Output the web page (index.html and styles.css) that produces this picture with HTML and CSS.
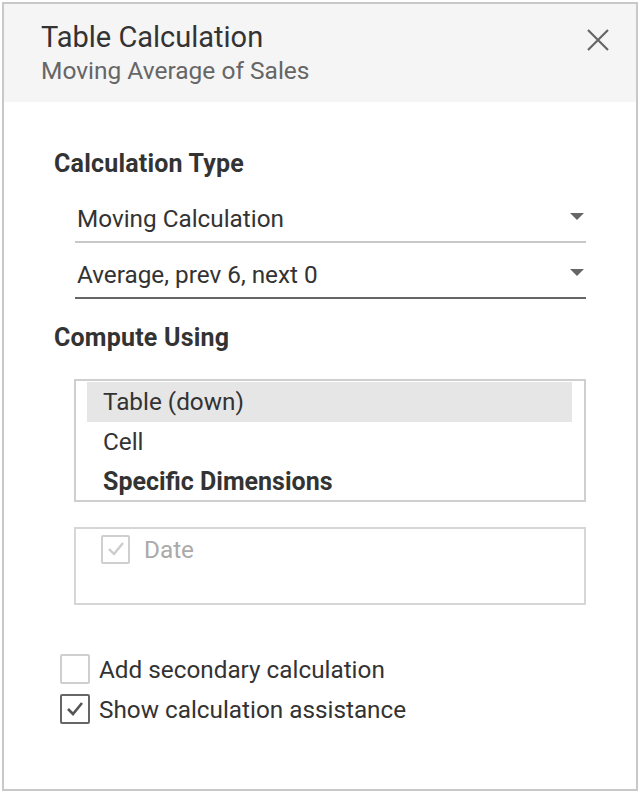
FILE: index.html
```html
<!DOCTYPE html>
<html>
<head>
<meta charset="utf-8">
<link rel="stylesheet" href="styles.css">
</head>
<body>
<div class="panel">
  <div class="header">
    <div class="titles">
      <div class="title">Table Calculation</div>
      <div class="subtitle">Moving Average of Sales</div>
    </div>
    <svg class="close" width="24" height="24" viewBox="0 0 24 24"><path d="M2 2 L22 22 M22 2 L2 22" stroke="#666" stroke-width="2.2" fill="none"/></svg>
  </div>
  <div class="content">
    <div class="section-title">Calculation Type</div>
    <div class="select light"><span>Moving Calculation</span><span class="arrow"></span></div>
    <div class="select dark"><span>Average, prev 6, next 0</span><span class="arrow"></span></div>
    <div class="section-title second">Compute Using</div>
    <div class="listbox">
      <div class="item selected">Table (down)</div>
      <div class="item">Cell</div>
      <div class="item bold">Specific Dimensions</div>
    </div>
    <div class="dimbox">
      <div class="check-row disabled">
        <span class="box"><svg width="18" height="14" viewBox="0 0 18 14"><path d="M2 7 L7 12 L16 1" stroke="#ccc" stroke-width="2.4" fill="none"/></svg></span>
        <span class="label">Date</span>
      </div>
    </div>
    <div class="options">
      <div class="check-row">
        <span class="box"></span>
        <span class="label">Add secondary calculation</span>
      </div>
      <div class="check-row">
        <span class="box checked"><svg width="18" height="14" viewBox="0 0 18 14"><path d="M2 7 L7 12 L16 1" stroke="#555" stroke-width="2.6" fill="none"/></svg></span>
        <span class="label">Show calculation assistance</span>
      </div>
    </div>
  </div>
</div>
</body>
</html>
```
FILE: styles.css
```css
* { box-sizing: border-box; }
html, body { margin: 0; padding: 0; background: #fff; }
body { font-family: Roboto, "Open Sans", sans-serif; color: #333; }
.panel {
  margin: 2px;
  width: 636px;
  height: 789px;
  border: 2px solid #c8c8c8;
  background: #fff;
}
.header {
  background: #f5f5f5;
  height: 98px;
  display: flex;
  justify-content: space-between;
  align-items: flex-start;
  padding: 17px 26px 0 37px;
}
.title { font-size: 29px; line-height: 32px; color: #333; }
.subtitle { font-size: 24.5px; line-height: 30px; color: #666; margin-top: 3px; }
.close { margin-top: 7px; }
.content { padding: 48px 50px 0 50px; }
.section-title { font-size: 25px; font-weight: bold; line-height: 28px; color: #333; letter-spacing: 0.2px; }
.section-title.second { margin-top: 25px; }
.select {
  margin-left: 21px;
  width: 511px;
  height: 56px;
  display: flex;
  align-items: center;
  justify-content: space-between;
  padding: 0 2px 0 2px;
  font-size: 24.3px;
  color: #333;
}
.select.light { border-bottom: 2px solid #c8c8c8; margin-top: 9px; }
.select.dark { border-bottom: 2px solid #666; }
.select span:first-child { margin-top: 8px; }
.arrow {
  width: 0; height: 0;
  border-left: 7px solid transparent;
  border-right: 7px solid transparent;
  border-top: 7px solid #666;
  margin-top: 4px;
}
.listbox {
  margin: 27px 0 0 20px;
  width: 512px;
  height: 123px;
  border: 2px solid #cfcfcf;
  padding: 1px 12px 0 11px;
}
.item { height: 40px; line-height: 40px; font-size: 24.3px; padding-left: 16px; color: #333; }
.item.selected { background: #e6e6e6; }
.item.bold { font-weight: bold; font-size: 25px; }
.dimbox {
  margin: 25px 0 0 20px;
  width: 512px;
  height: 78px;
  border: 2px solid #d6d6d6;
  padding: 0 0 0 25px;
}
.check-row { display: flex; align-items: center; height: 40px; }
.box {
  width: 30px; height: 30px;
  border: 2px solid #cfcfcf;
  border-radius: 2px;
  display: flex; align-items: center; justify-content: center;
  flex: none;
}
.box.checked { border-color: #666; }
.label { font-size: 24.3px; margin-left: 9px; color: #333; }
.disabled .box { width: 29px; height: 29px; }
.disabled .label { color: #aaa; margin-left: 14px; }
.options { margin: 44px 0 0 6px; }
```
